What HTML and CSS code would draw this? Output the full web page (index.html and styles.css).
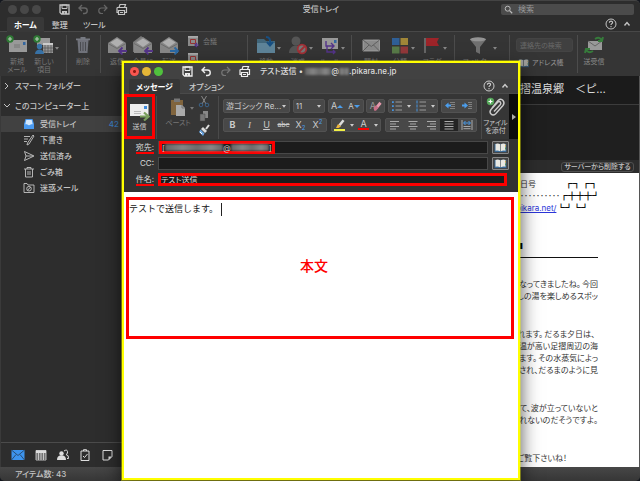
FILE: index.html
```html
<!DOCTYPE html>
<html lang="ja">
<head>
<meta charset="utf-8">
<title>受信トレイ</title>
<link rel="stylesheet" href="styles.css">
</head>
<body>
<svg class="defs" aria-hidden="true">
  <symbol id="save" viewBox="0 0 13 13"><path d="M2 2h9v9H3.500L2 9.500z" fill="none" stroke="currentColor" stroke-width="1.300"/><path d="M4 2h5v3.500H4z" fill="none" stroke="currentColor"/><path d="M4 8h5v3H7V9.500H6V11H4z" fill="currentColor"/></symbol>
  <symbol id="undo" viewBox="0 0 13 13"><path d="M5 2 2 5l3 3M2 5h5.500a2.700 2.700 0 0 1 0 5.500H6" fill="none" stroke="currentColor" stroke-width="1.400"/></symbol>
  <symbol id="redo" viewBox="0 0 13 13"><path d="m8 2 3 3-3 3M11 5H5.500a2.700 2.700 0 0 0 0 5.500H7" fill="none" stroke="currentColor" stroke-width="1.200"/></symbol>
  <symbol id="print" viewBox="0 0 13 13"><path d="M4 4.500 5 1.500h5.500l-1 3M2 4.500h9.500v5H10M3 9.500H2v-5M3.500 7.500h6v4h-6z" fill="none" stroke="currentColor" stroke-width="1.200"/><path d="M5 9.500h3" stroke="currentColor"/></symbol>
  <symbol id="help" viewBox="0 0 12 12"><circle cx="6" cy="6" r="5" fill="none" stroke="currentColor"/><path d="M4.400 4.800C4.400 2.500 7.700 2.700 7.600 4.600 7.500 5.700 6 5.700 6 7M6 8v1.200" fill="none" stroke="currentColor" stroke-width="1.100"/></symbol>
  <symbol id="up" viewBox="0 0 8 8"><path d="m1.500 5.500 2.500-3 2.500 3" fill="none" stroke="currentColor" stroke-width="1.400"/></symbol>
  <symbol id="caret" viewBox="0 0 4 4"><path d="M0 1h4L2 3.700z" fill="currentColor"/></symbol>
  <symbol id="lens" viewBox="0 0 9 9"><circle cx="3.700" cy="3.700" r="2.500" fill="none" stroke="#bbb"/><path d="m5.600 5.600 2.600 2.600" stroke="#bbb" stroke-width="1.300"/></symbol>
  <symbol id="newmail" viewBox="0 0 22 20"><path d="M3 5h18v12H3z" fill="#999"/><path d="M17 7h2.500v3H17z" fill="#3467a0"/><path d="M8 10h6M8 12h6" stroke="#777"/><circle cx="4" cy="4" r="3.700" fill="#2f7a35"/><path d="M4 2v4M2 4h4" stroke="#b5c9b5" stroke-width="1.200"/></symbol>
  <symbol id="newitem" viewBox="0 0 22 20"><path d="M4 3h13v7H4z" fill="#999"/><path d="M10 8h10v10H10z" fill="#999"/><path d="M10 8h10v2H10z" fill="#ccc"/><path d="M12 10v8m3-8v8m3-8v8m-8-5h10m-10 3h10" stroke="#555" stroke-width=".7"/><path d="M2 19c0-6 9-6 9 0z" fill="#3771a5"/><circle cx="6.500" cy="11.500" r="2.700" fill="#3771a5"/><circle cx="4" cy="4" r="3.700" fill="#2f7a35"/><path d="M4 2v4M2 4h4" stroke="#b5c9b5" stroke-width="1.200"/></symbol>
  <symbol id="trashbig" viewBox="0 0 20 20"><path d="M4.500 5h11l-1 13h-9z" fill="#70727a"/><path d="M3 3.500h14v1.700H3zM7.500 2h5v1.500h-5z" fill="#777a82"/><path d="M7.500 7v9M10 7v9m2.500-9v9" stroke="#4a4b50"/></symbol>
  <symbol id="openmail" viewBox="0 0 22 20"><path d="m2 8 9-6 9 6v10H2z" fill="#888"/><path d="M4.500 7.500 11 3.500l6.500 4L11 12z" fill="#b0b0b0"/><path d="m2 8.500 9 5 9-5" fill="none" stroke="#666" stroke-width=".8"/></symbol>
  <symbol id="reply" viewBox="0 0 22 20"><use href="#openmail"/><path d="M21 16h-8m3.500-3.500L13 16l3.500 3.500" fill="none" stroke="#54348a" stroke-width="1.800"/></symbol>
  <symbol id="replyall" viewBox="0 0 22 20"><path d="m1 7 8-6 4 3-8 6v7H1z" fill="#777"/><use href="#openmail"/><path d="M21 16h-8m3.500-3.500L13 16l3.500 3.500" fill="none" stroke="#54348a" stroke-width="1.800"/></symbol>
  <symbol id="forward" viewBox="0 0 22 20"><use href="#openmail"/><path d="M12 16h8m-3.500-3.500L20 16l-3.500 3.500" fill="none" stroke="#2b6aa5" stroke-width="1.800"/></symbol>
  <symbol id="meeting" viewBox="0 0 13 13"><path d="M1 1h10v10H1z" fill="#8b8b8b"/><path d="M1 1h10v1.700H1z" fill="#aaa"/><path d="M3.500 4.500h5v4h-5z" fill="none" stroke="#963232"/><path d="M12 10H8m2-2-2 2 2 2" fill="none" stroke="#54348a" stroke-width="1.200"/></symbol>
  <symbol id="folder" viewBox="0 0 20 20"><path d="M1 4h7l2 2h9v12H1z" fill="#41667a"/><path d="M1 8h18v10H1z" fill="#5e8499"/><path d="M10 2q5 0 4 7m-3-2 3 3.500L17 7" fill="none" stroke="#174f82" stroke-width="2"/></symbol>
  <symbol id="junk" viewBox="0 0 20 20"><circle cx="8" cy="6" r="4.500" fill="#555"/><path d="M1 18c0-10 14-10 14 0z" fill="#555"/><circle cx="14" cy="14" r="4.300" fill="#777" stroke="#a22f35" stroke-width="1.800"/><path d="m17 11-6 6" stroke="#a22f35" stroke-width="1.800"/></symbol>
  <symbol id="rules" viewBox="0 0 20 20"><path d="M2 3h16v11H2z" fill="#999"/><path d="M14 5h2.500v3H14z" fill="#3467a0"/><path d="M6 6v5h8m-3-3 3 3-3 3M7 11v6h8m-2-2 2 2-2 2" fill="none" stroke="#54348a" stroke-width="1.400"/></symbol>
  <symbol id="mail" viewBox="0 0 20 20"><path d="M2 5h16.500v11H2z" fill="#8a8a8a" stroke="#aaa" stroke-width=".8"/><path d="m2 5 8.300 6.500L18.500 5M2 16l6-6m10.500 6-6-6" fill="none" stroke="#555" stroke-width=".8"/></symbol>
  <symbol id="cats" viewBox="0 0 20 20"><path d="M2 3h7.500v7H2z" fill="#2f5f96"/><path d="M10.500 3H18v7h-7.500z" fill="#a08638"/><path d="M2 11.500h7.500v7H2z" fill="#587a48"/><path d="M10.500 11.500H18v7h-7.500z" fill="#92383a"/></symbol>
  <symbol id="flag" viewBox="0 0 20 20"><path d="M3 3v15" stroke="#777" stroke-width="1.500"/><path d="M4 3h13l-2 4 2 4H4z" fill="#9d2429"/></symbol>
  <symbol id="funnel" viewBox="0 0 20 20"><path d="M2 4.500 8 12v5l4 2v-7l6-7.500z" fill="#707070"/><ellipse cx="10" cy="4.300" rx="8" ry="2" fill="#949494"/></symbol>
  <symbol id="book" viewBox="0 0 13 11"><path d="M0 1h13v9H0z" fill="#386a98"/><path d="M1 1q3-1 5 .500V9Q4 8 1 8.500zM7 1.500Q9 0 12 1v7.500Q9 8 7 9z" fill="#e9e9e3"/><path d="M6.500 1.500V9" stroke="#888"/><path d="M12 2v2" stroke="#d5a13a"/><path d="M12 5v2" stroke="#4d9650"/></symbol>
  <symbol id="sync" viewBox="0 0 20 20"><path d="M4 6h14v9H4z" fill="#999"/><path d="m4 6 7 5 7-5" fill="none" stroke="#666"/><path d="M11 4q5-3 7 2m1-4-1 4-4 0M9 16q-5 3-7-2m-1 4 1-4 4 0" fill="none" stroke="#367b3b" stroke-width="2"/></symbol>
  <symbol id="right" viewBox="0 0 8 8"><path d="m2 1 3 3-3 3" fill="none" stroke="currentColor"/></symbol>
  <symbol id="down" viewBox="0 0 8 8"><path d="m1 2 3 3 3-3" fill="none" stroke="currentColor"/></symbol>
  <symbol id="inbox" viewBox="0 0 12 12"><path d="M2.500 1h7L11 6v5H1V6z" fill="#4a9af0"/><path d="M3.300 2h5.400l1 4.200H8q-2 2-4 0H2.300z" fill="#d3e7fb"/></symbol>
  <symbol id="draft" viewBox="0 0 12 12"><path d="M1 2.500h6M1 5h4M1 7.500h3M10 1l1 1-5 8-2 1 .500-2z" fill="none" stroke="currentColor" stroke-width=".9"/></symbol>
  <symbol id="sent" viewBox="0 0 12 12"><path d="m1.500 1.500 9.500 4.500-9.500 4.500L3 6zM3 6h7" fill="none" stroke="currentColor" stroke-width=".9"/></symbol>
  <symbol id="trash" viewBox="0 0 12 12"><path d="M1 3h10M4 3V1.500h4V3M2.500 3v8h7V3M5 5v4m2-4v4" fill="none" stroke="currentColor" stroke-width=".9"/></symbol>
  <symbol id="spam" viewBox="0 0 12 12"><path d="M1 10.500v-9h3l1 1.500h6v7.500z" fill="none" stroke="currentColor" stroke-width=".9"/><circle cx="6" cy="6.700" r="2.300" fill="none" stroke="currentColor" stroke-width=".9"/><path d="m7.600 5-3.200 3.400" stroke="currentColor"/></symbol>
  <symbol id="navmail" viewBox="0 0 14 12"><path d="M.500 1h13v10H.500z" fill="#3d94ee"/><path d="m.500 1 6.500 5.500L13.500 1M.500 11 5 5.500m8.500 5.500L9 5.500" fill="none" stroke="#263e58" stroke-width=".8"/></symbol>
  <symbol id="navcal" viewBox="0 0 12 12"><path d="M1 1.500h10v9.500H1zM1 5h10M1 7h10M1 9h10M3.500 4v7M6 4v7m2.500-7v7" fill="none" stroke="currentColor" stroke-width=".8"/><path d="M1 1.500h10V4H1z" fill="currentColor"/></symbol>
  <symbol id="navpeople" viewBox="0 0 12 12"><circle cx="4.500" cy="4.500" r="2.200" fill="currentColor"/><path d="M0 11q0-5 4.500-4.500Q9 6 9 11z" fill="currentColor"/><path d="M7 2q3-2 3.500.500Q11 5 9 5.500q3 .500 2.500 4H10" fill="none" stroke="currentColor"/></symbol>
  <symbol id="navtask" viewBox="0 0 12 12"><path d="M2 2h8v9.500H2zM4.500 2V.700h3V2m-3.500 5 1.500 1.500 3-3.500" fill="none" stroke="currentColor"/></symbol>
  <symbol id="navnote" viewBox="0 0 12 12"><path d="M2 1.500h9v6l-3.500 3.500H2z" fill="none" stroke="currentColor"/><path d="M11 7.500H7.500V11z" fill="currentColor"/></symbol>
  <symbol id="send" viewBox="0 0 20 18"><path d="M0 1h18.500v12H0z" fill="#eee"/><path d="M14 3h3v3h-3z" fill="#3f8bdc"/><path d="M4 8.500h7M4 10.500h7" stroke="#bbb"/><path d="M10 13.500h8m-4-4 4.500 4-4.500 4" fill="none" stroke="#7a9f5d" stroke-width="2.200"/></symbol>
  <symbol id="paste" viewBox="0 0 16 18"><path d="M1 2h12v15H1z" fill="#80643d"/><path d="M4 .500h6V4H4z" fill="#777"/><path d="M6 7h6l3 3v8H6z" fill="#aaa"/><path d="M12 7v3h3" fill="none" stroke="#777"/></symbol>
  <symbol id="cut" viewBox="0 0 12 12"><path d="M3.500 0 8 8M8.500 0 4 8" stroke="#888"/><circle cx="3" cy="9" r="1.800" fill="none" stroke="#3b638a"/><circle cx="9" cy="9" r="1.800" fill="none" stroke="#3b638a"/></symbol>
  <symbol id="copy" viewBox="0 0 12 12"><path d="M5 1h5v7H5z" fill="#888"/><path d="M2 4h5v7H2z" fill="#777" stroke="#444" stroke-width=".5"/></symbol>
  <symbol id="brush" viewBox="0 0 12 12"><path d="m11 1-3 4" stroke="#ddd" stroke-width="2"/><path d="m5 3 4 4-2 2-4-4z" fill="#ddd"/><path d="m2.500 5.500 4 4L5 12 1 8z" fill="#6aa4df"/><path d="m2 8 2 2" stroke="#fff"/></symbol>
  <symbol id="eraser" viewBox="0 0 14 12"><path d="m7 6 4-5 2.500 2.500-5 6z" fill="#e79aae"/><path d="m4 8 3-3 3 3-3 3.500H5z" fill="#c96f88"/></symbol>
  <symbol id="list" viewBox="0 0 12 12"><path d="M4.500 2H11M4.500 6H11M4.500 10H11" stroke="#999"/><path d="M1 1.200h1.800V3H1zm0 4h1.800V7H1zm0 4h1.800V11H1z" fill="#4794df"/></symbol>
  <symbol id="numlist" viewBox="0 0 12 12"><path d="M4.500 2H11M4.500 6H11M4.500 10H11" stroke="#999"/><path d="M2 .500v3m0 1v3m0 1v3" stroke="#4794df"/></symbol>
  <symbol id="outdent" viewBox="0 0 12 12"><path d="M6 2.500h5M7 4.500h4M7 6.500h4m-5 2h5" stroke="#888" stroke-width=".9"/><path d="M1 5.500 4.500 2.500v2H7v2H4.500v2z" fill="#4b9dec"/></symbol>
  <symbol id="indent" viewBox="0 0 12 12"><path d="M7 2.500h4M7.500 4.500H11M7.500 6.500H11m-4 2h4" stroke="#888" stroke-width=".9"/><path d="M7 5.500 3.500 2.500v2H1v2h2.500v2z" fill="#4b9dec"/></symbol>
  <symbol id="marker" viewBox="0 0 13 13"><path d="m9.500.500 2 1.500-4 5-2-1.500z" fill="#ddd"/><path d="m5 5 3 2.500L5.500 9H3z" fill="#f0b63c"/><path d="M1 10h11v2H1z" fill="#f0ef45"/></symbol>
  <symbol id="aleft" viewBox="0 0 12 12"><path d="M1 2.500h9M1 5h6M1 7.500h9M1 10h6" stroke="#aaa"/></symbol>
  <symbol id="acenter" viewBox="0 0 12 12"><path d="M1.500 2.500h9M3 5h6M1.500 7.500h9M3 10h6" stroke="#aaa"/></symbol>
  <symbol id="aright" viewBox="0 0 12 12"><path d="M2 2.500h9M5 5h6M2 7.500h9M5 10h6" stroke="#aaa"/></symbol>
  <symbol id="ajust" viewBox="0 0 12 12"><path d="M1.500 2.500h9m-9 2.500h9m-9 2.500h9m-9 2.500h9" stroke="#aaa"/></symbol>
  <symbol id="adist" viewBox="0 0 12 12"><path d="M1 1v10M11 1v10M2.500 7.500h7M2.500 9.700h7" stroke="#aaa"/><path d="m4.500 2-2 2 2 2m3-4 2 2-2 2M3 4h6" fill="none" stroke="#4b9dec"/></symbol>
  <symbol id="clip" viewBox="0 0 20 20"><path d="m6 11 6-7.500q3-2.500 5 0t0 5L9.500 17q-2.500 2-4.500 0t0-4.500L12 5q1.700-1 2.500.300t-.300 2.500L8 14.500" fill="none" stroke="#ccc" stroke-width="1.400"/><circle cx="4.500" cy="4.500" r="3.700" fill="#55a85a"/><path d="M4.500 2.500v4m-2-2h4" stroke="#fff" stroke-width="1.200"/></symbol>
  <symbol id="play" viewBox="0 0 4 6"><path d="M0 0v6l4-3z" fill="#aaa"/></symbol>
</svg>

<div class="app">
  <header class="titlebar">
    <div class="title-left">
      <span class="lights"><i></i><i></i><i></i></span>
      <span class="quick"><button aria-label="保存"><svg><use href="#save"/></svg></button><button class="dim" aria-label="元に戻す"><svg><use href="#undo"/></svg></button><button class="dim" aria-label="やり直し"><svg><use href="#redo"/></svg></button><button aria-label="印刷"><svg><use href="#print"/></svg></button></span>
    </div>
    <h1>受信トレイ</h1>
    <label class="search"><svg><use href="#lens"/></svg><input type="search" placeholder="検索" aria-label="検索"></label>
  </header>
  <nav class="tabs">
    <button class="active">ホーム</button><button>整理</button><button>ツール</button>
    <span class="tabs-end"><button aria-label="ヘルプ"><svg class="i12"><use href="#help"/></svg></button><button aria-label="リボンを閉じる"><svg class="i8"><use href="#up"/></svg></button></span>
  </nav>
  <div class="ribbon">
    <div class="group g-new">
      <button class="tool"><svg><use href="#newmail"/></svg><span>新規<br>メール</span></button>
      <button class="tool"><svg><use href="#newitem"/></svg><span>新しい<br>項目</span></button>
      <svg class="caret"><use href="#caret"/></svg>
    </div>
    <div class="group g-del"><button class="tool"><svg><use href="#trashbig"/></svg><span>削除</span></button></div>
    <div class="group g-reply">
      <button class="tool"><svg><use href="#reply"/></svg><span>返信</span></button>
      <button class="tool"><svg><use href="#replyall"/></svg><span>全員に</span></button>
      <button class="tool"><svg><use href="#forward"/></svg><span>転送</span></button>
      <div class="stack"><button><svg><use href="#meeting"/></svg>会議</button><button aria-label="添付ファイル"><svg><use href="#meeting"/></svg></button></div>
    </div>
    <div class="group g-move">
      <button class="tool"><svg><use href="#folder"/></svg><span>移動</span></button><svg class="caret"><use href="#caret"/></svg>
      <button class="tool"><svg><use href="#junk"/></svg><span>迷惑</span></button><svg class="caret"><use href="#caret"/></svg>
      <button class="tool"><svg><use href="#rules"/></svg><span>ルール</span></button><svg class="caret"><use href="#caret"/></svg>
    </div>
    <div class="group g-cat">
      <button class="tool"><svg><use href="#mail"/></svg><span>開封</span></button>
      <button class="tool"><svg><use href="#cats"/></svg><span>分類</span></button><svg class="caret"><use href="#caret"/></svg>
      <button class="tool"><svg><use href="#flag"/></svg><span>フラグ</span></button><svg class="caret"><use href="#caret"/></svg>
    </div>
    <div class="group g-filter"><button class="tool"><svg><use href="#funnel"/></svg><span>フィルター</span></button><svg class="caret"><use href="#caret"/></svg></div>
    <div class="group g-find"><input type="text" placeholder="連絡先の検索" aria-label="連絡先の検索"><button><svg><use href="#book"/></svg>アドレス帳</button></div>
    <div class="group g-sync"><button class="tool"><svg><use href="#sync"/></svg><span>送受信</span></button></div>
  </div>

  <main class="content">
    <aside class="sidebar">
      <button class="section"><svg><use href="#right"/></svg>スマート フォルダー</button>
      <button class="section"><svg><use href="#down"/></svg>このコンピューター上</button>
      <ul class="folders">
        <li><a href="#" class="current"><svg><use href="#inbox"/></svg>受信トレイ<b>42</b></a></li>
        <li><a href="#"><svg><use href="#draft"/></svg>下書き</a></li>
        <li><a href="#"><svg><use href="#sent"/></svg>送信済み</a></li>
        <li><a href="#"><svg><use href="#trash"/></svg>ごみ箱</a></li>
        <li><a href="#"><svg><use href="#spam"/></svg>迷惑メール</a></li>
      </ul>
      <nav class="modules">
        <button aria-label="メール"><svg class="wide"><use href="#navmail"/></svg></button><button aria-label="予定表"><svg><use href="#navcal"/></svg></button><button aria-label="連絡先"><svg><use href="#navpeople"/></svg></button><button aria-label="タスク"><svg><use href="#navtask"/></svg></button><button aria-label="メモ"><svg><use href="#navnote"/></svg></button>
      </nav>
    </aside>
    <article class="reader">
      <h2>摺温泉郷　＜ピ…</h2>
      <div class="meta"></div>
      <div class="actions"><button>サーバーから削除する</button></div>
      <div class="mail">
        <div class="banner">
          <p><span>日号</span><span>┏┓&#8198;┏┓</span></p>
          <p><span class="dots">･･････････</span><span>┏╋╋╋┛</span></p>
          <p class="short"><a href="#">pikara.net/</a><span>┗┛┗┛</span></p>
        </div>
        <div class="mark">■</div>
        <hr>
        <div class="story">
          <p>なってきましたね。&#8198;今回<br>しの湯を楽しめるスポッ</p>
          <p class="comma">れます。&#8198;だるま夕日は、</p>
          <p class="cont">水温が高い足摺周辺の海<br>ます。&#8198;その水蒸気によっ<br>され、だるまのように見</p>
          <p>て、波が立っていないと<br>れないのだそうですよ。</p>
          <p class="last">ご覧下さいね！</p>
        </div>
      </div>
    </article>
  </main>
  <footer class="status">アイテム数: 43</footer>
</div>

<section class="composer" aria-label="テスト送信">
  <header class="c-title">
    <span class="lights color"><i></i><i></i><i></i></span>
    <span class="quick"><button aria-label="保存"><svg><use href="#save"/></svg></button><button aria-label="元に戻す"><svg><use href="#undo"/></svg></button><button class="dim" aria-label="やり直し"><svg><use href="#redo"/></svg></button><button aria-label="印刷"><svg><use href="#print"/></svg></button></span>
    <h2>テスト送信 • <span class="hidden-name w26"></span>@<span class="hidden-name w10"></span>.pikara.ne.jp</h2>
  </header>
  <nav class="tabs c-tabs">
    <button class="active">メッセージ</button><button>オプション</button>
    <span class="tabs-end"><button aria-label="ヘルプ"><svg class="i12"><use href="#help"/></svg></button><button aria-label="リボンを閉じる"><svg class="i8"><use href="#up"/></svg></button></span>
  </nav>
  <div class="c-ribbon">
    <button class="send"><svg><use href="#send"/></svg>送信</button>
    <div class="clipboard">
      <button class="paste"><svg><use href="#paste"/></svg>ペースト</button>
      <svg class="caret"><use href="#caret"/></svg>
      <div class="clip-list"><button aria-label="切り取り"><svg><use href="#cut"/></svg></button><button aria-label="コピー"><svg><use href="#copy"/></svg></button><button aria-label="書式のコピー"><svg><use href="#brush"/></svg></button></div>
    </div>
    <div class="format">
      <div class="f-row">
        <span class="pick font"><select aria-label="フォント"><option>游ゴシック Re...</option></select><svg class="caret"><use href="#caret"/></svg></span>
        <span class="pick size"><select aria-label="サイズ"><option>11</option></select><svg class="caret"><use href="#caret"/></svg></span>
        <span class="set"><button>A<i class="tri-up"></i></button><button class="small">A<i class="tri-down"></i></button></span>
        <span class="set eraser"><button><em>A</em><svg><use href="#eraser"/></svg></button></span>
        <span class="set lists"><button aria-label="箇条書き"><svg><use href="#list"/></svg></button><svg class="caret"><use href="#caret"/></svg><button aria-label="段落番号"><svg><use href="#numlist"/></svg></button><svg class="caret"><use href="#caret"/></svg></span>
        <span class="set"><button aria-label="インデント解除"><svg><use href="#outdent"/></svg></button><button aria-label="インデント"><svg><use href="#indent"/></svg></button></span>
      </div>
      <div class="f-row">
        <span class="set"><button><b>B</b></button><button class="ital">I</button><button><u>U</u></button><button class="strike">abc</button><button>X<sub>2</sub></button><button>X<sup>2</sup></button></span>
        <span class="set colors"><button aria-label="蛍光ペン"><svg class="i13"><use href="#marker"/></svg></button><svg class="caret"><use href="#caret"/></svg><button><span class="fc">A</span></button><svg class="caret"><use href="#caret"/></svg></span>
        <span class="set aligns"><button aria-label="左揃え"><svg><use href="#aleft"/></svg></button><button aria-label="中央揃え"><svg><use href="#acenter"/></svg></button><button aria-label="右揃え"><svg><use href="#aright"/></svg></button><button class="on" aria-label="両端揃え"><svg><use href="#ajust"/></svg></button><button aria-label="均等割り付け"><svg><use href="#adist"/></svg></button></span>
      </div>
    </div>
    <button class="attach"><svg><use href="#clip"/></svg><span>ファイル<br>を添付</span></button>
    <button class="more" aria-label="さらに表示"><svg><use href="#play"/></svg></button>
  </div>
  <form class="fields">
    <label for="to"><span class="underlined">宛先:</span></label>
    <div class="box"><span class="recipient">[<span class="hidden-name w56"></span>@<span class="hidden-name w37"></span>]</span><input id="to" type="text"></div>
    <button type="button" class="book" aria-label="宛先を選択"><svg><use href="#book"/></svg></button>
    <label for="cc">CC:</label>
    <div class="box"><input id="cc" type="text"></div>
    <button type="button" class="book" aria-label="CCを選択"><svg><use href="#book"/></svg></button>
    <label for="subject"><span class="underlined">件名:</span></label>
    <div class="box subject"><input id="subject" type="text" value="テスト送信"></div>
  </form>
  <div class="body">
    <div class="body-frame">
      <textarea aria-label="本文">テストで送信します。</textarea>
      <i class="cursor"></i>
      <strong>本文</strong>
    </div>
  </div>
</section>
</body>
</html>
```
FILE: styles.css
```css
* { box-sizing: border-box; }
html, body { height: 100%; margin: 0; }
body {
  position: relative;
  overflow: hidden;
  background: #14171e;
  color: #c4c4c4;
  font: 8px/12px Inter, "Noto Sans CJK JP", sans-serif;
  font-feature-settings: "palt";
}
button, input, select, textarea { font: inherit; font-feature-settings: inherit; color: inherit; margin: 0; padding: 0; border: 0; background: none; outline: 0; }
button { display: flex; align-items: center; justify-content: center; white-space: nowrap; }
h1, h2, p, ul { margin: 0; padding: 0; font-size: 8px; font-weight: 500; }
svg { display: block; flex: none; width: 12px; height: 12px; }
.defs { position: absolute; width: 0; height: 0; }
.caret { width: 4px; height: 4px; }
.i12 { width: 12px; height: 12px; }
.i8 { width: 8px; height: 8px; }

/* Main window */
.app { height: 100%; display: flex; flex-direction: column; border-radius: 5px; overflow: hidden; background: #2d2d2d; border-top: 1px solid #444; }
.titlebar { flex: none; height: 16px; display: grid; grid-template-columns: 1fr auto 1fr; align-items: center; padding: 0 6px 0 8px; }
.title-left { display: flex; align-items: center; gap: 17px; }
.lights { display: flex; gap: 3px; }
.lights i { width: 9px; height: 9px; border-radius: 50%; background: #484848; }
.quick { display: flex; gap: 6px; }
.quick svg { width: 13px; height: 13px; }
.dim { color: #666; }
.search { justify-self: end; width: 133px; height: 11px; display: flex; align-items: center; gap: 5px; padding: 0 3px; background: #4b4b4b; border-radius: 2px; }
.search svg { width: 9px; height: 9px; }
.search input { flex: 1; min-width: 0; height: 11px; }
::placeholder { color: #999; opacity: 1; }
.tabs { flex: none; height: 15px; display: flex; padding-left: 7px; font-weight: 500; border-bottom: 1px solid #484848; }
.tabs > button { padding: 0 7px; height: 15px; margin-right: 1px; }
.tabs > .active { background: #383838; color: #fff; font-weight: 700; border-radius: 2px 2px 0 0; }
.tabs-end { margin-left: auto; display: flex; gap: 6px; padding-right: 9px; }

.ribbon { flex: none; height: 44px; display: flex; background: #353535; color: #777; font-size: 7px; line-height: 8px; }
.group { display: flex; flex: none; padding-top: 3px; position: relative; }
.group::after { content: ""; margin: 0 0 3px auto; width: 1px; background: #4c4c4c; }
.group .caret { margin-top: 11px; color: #888; }
.tool { flex-direction: column; justify-content: flex-start; width: 22px; }
.tool svg { width: 22px; height: 20px; margin-bottom: 3px; }
.g-new { width: 67px; padding-left: 6px; }
.g-new .tool + .tool { margin-left: 5px; }
.g-del { width: 34px; padding-left: 5px; }
.g-reply { width: 147px; padding-left: 5px; gap: 4px; }
.stack { display: flex; flex-direction: column; align-items: flex-start; gap: 4px; padding-left: 3px; }
.stack button { gap: 3px; }
.stack svg { width: 13px; height: 13px; }
.g-move { width: 104px; padding-left: 7px; }
.g-move .caret, .g-cat .caret { margin-right: 6px; }
.g-cat { width: 103px; padding-left: 8px; }
.g-cat .tool:first-child { margin-right: 7px; }
.g-filter { width: 55px; padding-left: 12px; }
.g-filter .caret { margin-left: 4px; }
.g-find { width: 68px; padding: 6px 5px 0 6px; display: grid; grid-template-columns: 1fr; grid-template-rows: 14px 18px; row-gap: 2px; }
.g-find::after { position: absolute; top: 3px; bottom: 0; right: 0; }
.g-find input { width: 100%; height: 14px; padding-left: 3px; border: 1px solid #444; border-radius: 3px; background: #404040; }
.g-find ::placeholder { color: #686868; }
.g-find button { gap: 3px; justify-content: flex-start; padding-left: 2px; color: #999; }
.g-find svg { width: 11px; height: 9px; opacity: .6; }
.g-sync { padding-left: 5px; }
.g-sync::after { display: none; }
.g-sync .tool { color: #888; }

.content { flex: 1; min-height: 0; display: flex; justify-content: space-between; background: #222; }
.sidebar { width: 122px; display: flex; flex-direction: column; background: #2d2d2d; border-left: 1px solid #3a3a3a; font-weight: 500; }
.section { height: 20px; gap: 4px; padding-left: 2px; justify-content: flex-start; flex: none; }
.section svg { width: 8px; height: 8px; }
.folders { list-style: none; }
.folders a { height: 16px; display: flex; align-items: center; gap: 5px; padding: 0 3px 0 22px; color: inherit; text-decoration: none; }
.folders .current { background: #414141; }
.folders b { margin-left: auto; color: #3d80c4; font-weight: 500; }
.modules { margin-top: auto; height: 25px; flex: none; display: flex; align-items: center; gap: 10px; padding-left: 10px; border-top: 1px solid #4b4b4b; color: #ddd; }
.modules .wide { width: 14px; }
.status { flex: none; height: 14px; padding: 1px 15px 0; background: linear-gradient(#474747, #363636); font-weight: 500; }

.reader { width: 120px; display: flex; flex-direction: column; background: #1f1f1f; border-right: 1px solid #555; }
.reader h2 { height: 29px; flex: none; font-size: 11px; line-height: 26px; color: #ddd; font-weight: 400; white-space: nowrap; background: #1b1b1b; border-bottom: 1px solid #3c3c3c; }
.meta { height: 55px; flex: none; }
.actions { height: 13px; flex: none; display: flex; justify-content: flex-end; align-items: center; padding-right: 5px; background: #2c2c2c; }
.actions button { height: 10px; width: 73px; border: 1px solid #505050; border-radius: 3px; font-weight: 500; font-size: 7px; }
.mail { flex: 1; min-height: 0; overflow: hidden; padding: 5px 41px 0 0; background: #fff; color: #333; white-space: nowrap; }
.banner p { display: flex; justify-content: space-between; height: 12px; font-weight: 400; }
.banner span:last-child { font-family: "Noto Sans CJK JP", sans-serif; font-feature-settings: normal; color: #111; }
.banner .short { padding-right: 9px; }
.banner a { color: #2b35d8; margin-left: -4px; }
.mark { margin-top: 26px; line-height: 12px; width: 3px; overflow: hidden; direction: rtl; color: #000; }
.mail hr { margin: 5px 0 20px; border: 0; border-top: 1px solid #111; }
.story { display: flex; flex-direction: column; gap: 26px; text-align: right; }
.story p { font-weight: 400; margin-left: -20px; }
.story .comma { padding-right: 3px; }
.story .cont { margin-top: -26px; }
.story .last { padding-right: 31px; }

/* Message window */
.composer {
  position: absolute;
  left: 122px;
  top: 61px;
  bottom: 1px;
  width: 398px;
  display: flex;
  flex-direction: column;
  border: 2px solid #ff0;
  outline: 1px solid #ffff0060;
  background: #323232;
  color: #ccc;
  box-shadow: 0 8px 18px rgba(0, 0, 0, .7);
}
.c-title { flex: none; height: 16px; display: flex; align-items: center; padding-left: 6px; background: #424242; }
.c-title .quick { margin-left: 18px; color: #eee; }
.c-title .dim { color: #777; }
.c-title h2 { margin-left: 9px; display: flex; align-items: center; white-space: pre; color: #ddd; }
.lights.color i:nth-child(1) { background: radial-gradient(circle, #8c1a12 0 1px, #f9564f 2px); }
.lights.color i:nth-child(2) { background: #e5b637; }
.lights.color i:nth-child(3) { background: #50c13d; }
.hidden-name { display: inline-block; height: 7px; background: linear-gradient(90deg, #666, #858585 30%, #6c6c6c 55%, #888 80%, #666); filter: blur(1px); }
.w26 { width: 26px; }
.w10 { width: 10px; }
.w56 { width: 58px; }
.w37 { width: 38px; }
.c-tabs { padding-left: 5px; background: #404040; border-color: #4a4a4a; }
.c-tabs > button { margin-right: 2px; }
.c-tabs > .active { background: #363636; }
.c-ribbon { flex: none; height: 45px; display: flex; background: #363636; font-size: 7px; line-height: 8px; }
.send { width: 31px; flex-direction: column; gap: 2px; border: 3px solid #f00; }
.send svg { width: 20px; height: 18px; }
.clipboard { width: 63px; display: flex; margin-top: 2px; padding: 0 8px 0 9px; border: solid #4a4a4a; border-width: 0 1px; margin-left: 1px; color: #777; }
.paste { width: 24px; flex-direction: column; gap: 3px; justify-content: flex-start; padding-top: 2px; }
.paste svg { width: 16px; height: 18px; }
.clipboard .caret { margin-top: 10px; }
.clip-list { margin-left: auto; display: flex; flex-direction: column; gap: 2px; }
.format { width: 254px; margin-left: 4px; padding-top: 5px; display: flex; flex-direction: column; gap: 5px; }
.f-row { display: flex; height: 14px; justify-content: space-between; }
.pick, .set { display: flex; align-items: center; height: 14px; background: #484848; border: 1px solid #525252; border-radius: 2px; color: #ccc; font-size: 8px; }
.pick select { appearance: none; flex: 1; min-width: 0; height: 12px; padding-left: 2px; }
.pick .caret { margin-right: 3px; }
.font { width: 67px; }
.size { width: 32px; }
.set button { width: 17px; height: 12px; font-size: 9px; }
.set .small { font-size: 8px; }
.set .caret { margin: 0 2px 0 3px; }
.lists button, .colors button { width: 15px; }
.set .strike { font-size: 7px; text-decoration: line-through; }
.set .ital { font: italic 9px "Liberation Serif", serif; }
.set sub, .set sup { font-size: 6px; color: #4b9dec; line-height: 6px; }
.set sub { align-self: flex-end; }
.set sup { align-self: flex-start; }
.set em { font-style: normal; margin-right: -6px; color: #999; }
.set .i13 { width: 13px; height: 13px; }
.set .on { background: #242424; }
.aligns button { width: 18px; }
.tri-up, .tri-down { border: solid transparent; border-width: 0 3px; }
.tri-up { border-bottom: 3px solid #4b9dec; }
.tri-down { border-top: 3px solid #4b9dec; }
.fc { width: 11px; line-height: 8px; border-bottom: 2px solid #f00; }
.attach { flex: 1; min-width: 0; overflow: hidden; flex-direction: column; justify-content: flex-start; margin: 2px 0 0 4px; padding-top: 1px; border-left: 1px solid #4a4a4a; }
.attach svg { width: 20px; height: 20px; margin-bottom: 2px; }
.more { width: 9px; background: #0c0c0c; }
.more svg { width: 4px; height: 6px; }

.fields { flex: none; display: grid; grid-template-columns: 28px 1fr 17px; grid-auto-rows: 13px; gap: 3px 4px; padding: 2px 9px 6px 2px; }
.fields label { text-align: right; color: #ddd; }
.underlined { display: inline-block; height: 13px; border-bottom: 2px solid #f00; }
.box { display: flex; background: #1c1c1c; border: 1px solid #484848; }
.box input { flex: 1; min-width: 0; height: 11px; padding-left: 3px; color: #ddd; }
.recipient { display: flex; align-items: center; width: 116px; margin: -1px 0; border: 3px solid #f00; }
.subject { grid-column: 2 / 4; margin-right: 2px; border: 3px solid #f00; }
.subject input { height: 7px; padding-left: 0; line-height: 7px; }
.book { background: #444; border: 1px solid #888; border-radius: 1px; }
.book svg { width: 13px; height: 10px; }
.body { flex: 1; min-height: 0; background: #fff; padding: 5px 4px 0 2px; }
.body-frame { position: relative; height: 142px; border: 3px solid #f00; display: grid; place-items: center; }
.body-frame > * { grid-area: 1 / 1; }
.body textarea { width: 100%; height: 100%; resize: none; color: #111; font-size: 9px; line-height: 14px; font-feature-settings: normal; padding: 2px 0 0; }
.body strong { padding: 0 12px 4px 0; color: #f00; font-size: 14px; font-weight: 500; line-height: 20px; }
.cursor { position: absolute; left: 92px; top: 3px; width: 1px; height: 13px; background: #222; }
```
